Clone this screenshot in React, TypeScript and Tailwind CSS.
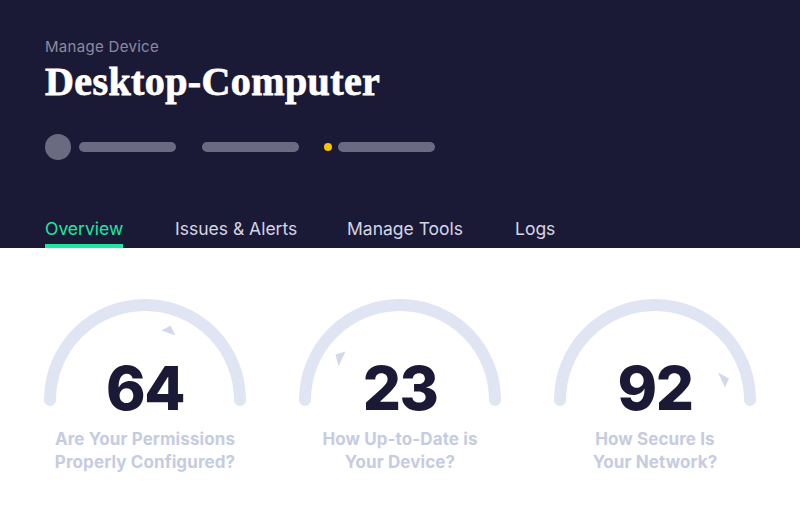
import React from "react";

const gauges = [
  { value: "64", l1: "Are Your Permissions", l2: "Properly Configured?", tri: "117.5,31.5 126.5,26.5 131.5,36.5" },
  { value: "23", l1: "How Up-to-Date is", l2: "Your Device?", tri: "36.5,55.5 46.5,52.5 39.5,67.5" },
  { value: "92", l1: "How Secure Is", l2: "Your Network?", tri: "164,73.5 175,79.5 171,88.5" },
];

function Gauge({ value, l1, l2, tri }: { value: string; l1: string; l2: string; tri: string }) {
  return (
    <div className="flex w-[202px] flex-col items-center">
      <div className="grid h-[119px] w-[202px]">
        <svg
          className="col-start-1 row-start-1 self-start"
          width="202"
          height="110"
          viewBox="0 0 202 110"
        >
          <path
            d="M 6 101 A 95 95 0 0 1 196 101"
            fill="none"
            stroke="#e0e5f3"
            strokeWidth="12"
            strokeLinecap="round"
          />
          <polygon points={tri} fill="#d3d9ec" />
        </svg>
        <div className="col-start-1 row-start-1 self-end text-center text-[60px] leading-[60px] font-extrabold tracking-[-1.5px] text-[#1b1a36]">
          {value}
        </div>
      </div>
      <div className="mt-[10px] text-center text-[17px] leading-[23px] font-bold tracking-[0.1px] text-[#c6cce0]">
        <div>{l1}</div>
        <div>{l2}</div>
      </div>
    </div>
  );
}

export default function App() {
  return (
    <div className="h-[513px] w-[800px] overflow-hidden bg-white" style={{ fontFamily: "Inter, 'Noto Sans', sans-serif" }}>
      <div className="flex h-[248px] flex-col bg-[#1b1a36] px-[45px] pt-[37px]">
        <div className="text-[15px] leading-[20px] tracking-[0.3px] text-[#8b8ba0]">Manage Device</div>
        <div
          className="mt-[5px] text-[40px] leading-[40px] font-bold tracking-[0.4px] text-white [-webkit-text-stroke:0.8px_#ffffff]"
          style={{ fontFamily: "'Liberation Serif', serif" }}
        >
          Desktop-Computer
        </div>
        <div className="mt-[32px] flex h-[26px] items-center">
          <div className="h-[26px] w-[26px] rounded-full bg-[#6a6a80]" />
          <div className="ml-[8px] h-[10px] w-[97px] rounded-full bg-[#6a6a80]" />
          <div className="ml-[26px] h-[10px] w-[97px] rounded-full bg-[#6a6a80]" />
          <div className="ml-[25px] h-[8px] w-[8px] rounded-full bg-[#f5c400]" />
          <div className="ml-[6px] h-[10px] w-[97px] rounded-full bg-[#6a6a80]" />
        </div>
        <div className="mt-[57px] flex text-[17.5px] leading-[24px]">
          <div className="flex w-[130px]">
            <div className="flex flex-col">
              <div className="text-[#1ee89e]">Overview</div>
              <div className="mt-[3px] h-[4px] bg-[#1ee89e]" />
            </div>
          </div>
          <div className="w-[172px] text-[#d5d5e4]">Issues &amp; Alerts</div>
          <div className="w-[168px] text-[#d5d5e4]">Manage Tools</div>
          <div className="text-[#d5d5e4]">Logs</div>
        </div>
      </div>
      <div className="flex justify-between px-[44px] pt-[51px]">
        {gauges.map((g) => (
          <Gauge key={g.value} {...g} />
        ))}
      </div>
    </div>
  );
}
